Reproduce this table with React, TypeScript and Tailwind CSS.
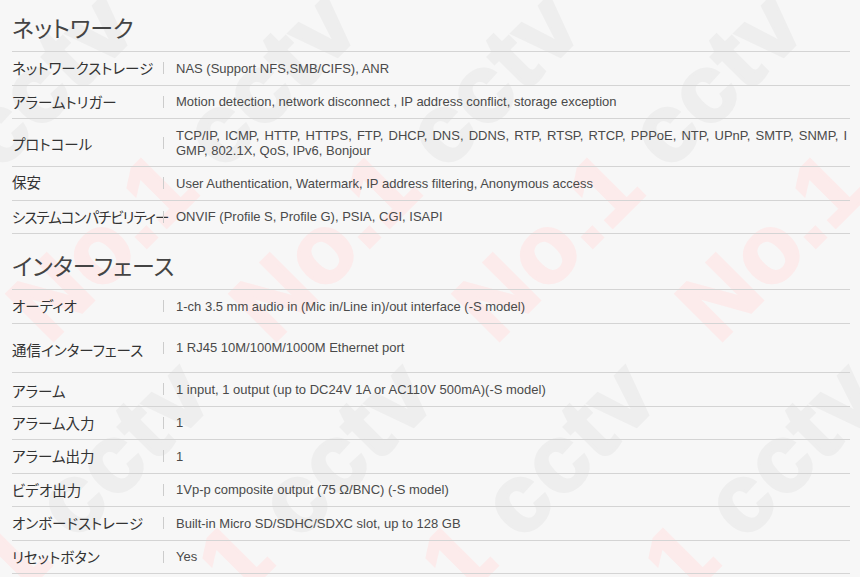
import React from "react";

type Row = { label: string; value: React.ReactNode; rowClass?: string; labelClass?: string };

const network: Row[] = [
  { label: "ネットワークストレージ", value: "NAS (Support NFS,SMB/CIFS), ANR" },
  { label: "アラームトリガー", value: "Motion detection, network disconnect , IP address conflict, storage exception" },
  {
    label: "プロトコール",
    value: (
      <>
        <div className="whitespace-normal text-justify [text-align-last:justify] pr-[3px]">
          TCP/IP, ICMP, HTTP, HTTPS, FTP, DHCP, DNS, DDNS, RTP, RTSP, RTCP, PPPoE, NTP, UPnP, SMTP, SNMP, I
        </div>
        <div>GMP, 802.1X, QoS, IPv6, Bonjour</div>
      </>
    ),
    rowClass: "h-[48px]",
    labelClass: "mt-[3px]",
  },
  { label: "保安", value: "User Authentication, Watermark, IP address filtering, Anonymous access", labelClass: "-mt-[3px]" },
  { label: "システムコンパチビリティー", value: "ONVIF (Profile S, Profile G), PSIA, CGI, ISAPI", labelClass: "tracking-[-1px]" },
];

const iface: Row[] = [
  { label: "オーディオ", value: "1-ch 3.5 mm audio in (Mic in/Line in)/out interface (-S model)" },
  { label: "通信インターフェース", value: "1 RJ45 10M/100M/1000M Ethernet port", rowClass: "h-[49.5px]", labelClass: "mt-[5px]" },
  { label: "アラーム", value: "1 input, 1 output (up to DC24V 1A or AC110V 500mA)(-S model)", labelClass: "mt-[3px]" },
  { label: "アラーム入力", value: "1" },
  { label: "アラーム出力", value: "1" },
  { label: "ビデオ出力", value: "1Vp-p composite output (75 Ω/BNC) (-S model)" },
  { label: "オンボードストレージ", value: "Built-in Micro SD/SDHC/SDXC slot, up to 128 GB" },
  { label: "リセットボタン", value: "Yes" },
];

function Watermark() {
  const items: { x: number; y: number }[] = [];
  for (let i = -6; i <= 8; i++) {
    for (let j = -4; j <= 4; j++) {
      const x = 495 + i * 223 + j * 370;
      const y = 345 - j * 370;
      if (x > -700 && x < 1300 && y > -300 && y < 1200) items.push({ x, y });
    }
  }
  return (
    <svg className="absolute inset-0 pointer-events-none" width="860" height="577" viewBox="0 0 860 577">
      {items.map((p, k) => (
        <text
          key={k}
          x={p.x}
          y={p.y}
          transform={`rotate(-45 ${p.x} ${p.y})`}
          fontFamily="'Liberation Sans', Arial, sans-serif"
          fontWeight="bold"
          fontSize="96"
          letterSpacing="2"
        >
          <tspan fill="#fcebeb" stroke="#fcebeb" strokeWidth="3">No.1 </tspan>
          <tspan fill="#eeeeee" stroke="#eeeeee" strokeWidth="3">cctv</tspan>
        </text>
      ))}
    </svg>
  );
}

function SpecRow({ r }: { r: Row }) {
  return (
    <div className={`flex items-center border-b border-[#d4d4d4] ${r.rowClass ?? "h-[33.5px]"}`}>
      <div
        className={`w-[151px] shrink-0 whitespace-nowrap text-[14.5px] leading-[20px] text-[#333] [font-family:'Noto_Sans_CJK_JP',sans-serif] [font-feature-settings:'palt'] ${r.labelClass ?? ""}`}
      >
        {r.label}
      </div>
      <div className="w-px h-[12px] bg-[#cccccc] shrink-0" />
      <div className="flex-1 min-w-0 pl-[12px] whitespace-nowrap text-[13px] leading-[15px] text-[#4a4a4a] [font-family:'Liberation_Sans',Arial,sans-serif]">
        {r.value}
      </div>
    </div>
  );
}

function Heading({ title, className }: { title: string; className?: string }) {
  return (
    <div
      className={`h-[52px] pt-[13px] border-b border-[#d4d4d4] text-[23px] leading-[28px] text-[#444] [font-family:'Noto_Sans_CJK_JP',sans-serif] [font-feature-settings:'palt'] ${className ?? ""}`}
    >
      {title}
    </div>
  );
}

export default function App() {
  return (
    <div className="relative w-[860px] h-[577px] overflow-hidden bg-[#f7f7f7]">
      <Watermark />
      <div className="relative pl-[12px] pr-[10px]">
        <Heading title="ネットワーク" />
        {network.map((r) => (
          <SpecRow key={r.label} r={r} />
        ))}
        <Heading title="インターフェース" className="mt-[4px]" />
        {iface.map((r) => (
          <SpecRow key={r.label} r={r} />
        ))}
      </div>
    </div>
  );
}
